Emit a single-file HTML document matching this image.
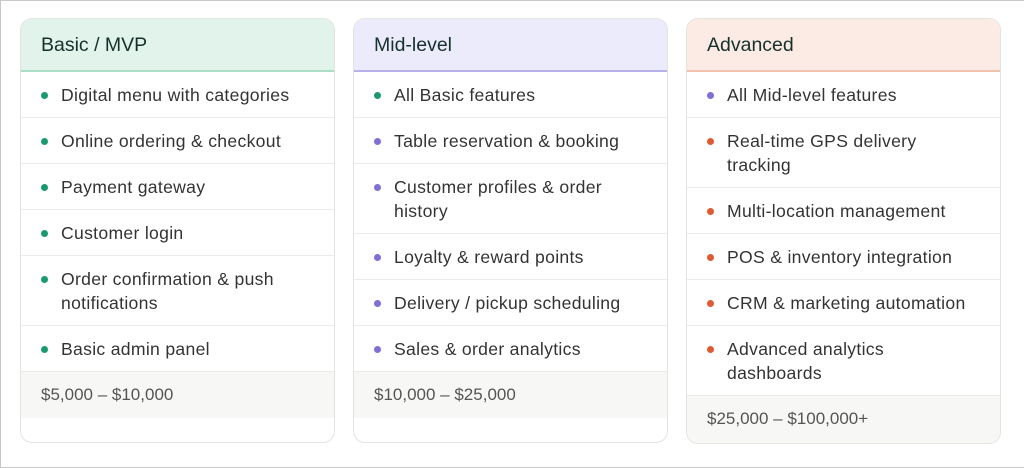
<!DOCTYPE html>
<html><head><style>
*{box-sizing:border-box;margin:0;padding:0}
body{width:1024px;height:468px;background:#fff;font-family:"Liberation Sans",sans-serif;position:relative;overflow:hidden}
.frame{position:absolute;left:0;top:0;width:1024px;height:468px;border:1px solid #c8c8c8;border-right:none}
.card{position:absolute;top:18px;width:315px;border:1px solid #e3e3e0;border-radius:12px;overflow:hidden;background:#fff}
.hd{height:53px;padding:15px 0 0 20px;font-size:19.5px;color:#16302c;border-bottom:2px solid}
.row{border-bottom:1px solid #ebebea;padding:11px 6px 10px 40px;font-size:17.6px;letter-spacing:0.3px;line-height:24px;color:#333;position:relative}
.row:before{content:"";position:absolute;left:20px;top:20px;width:7px;height:7px;border-radius:50%;background:var(--c)}
.price{background:#f7f7f5;padding:12px 0 12px 20px;font-size:17px;line-height:22px;color:#555}
.g{--c:#1a9a6c}.p{--c:#7f6fd6}.o{--c:#de5a30}
</style></head><body>
<div class="frame"></div>
<div class="card" style="left:20px;height:425px">
<div class="hd" style="background:#e1f3eb;border-color:#aadcc6">Basic / MVP</div>
<div class="row g">Digital menu with categories</div>
<div class="row g">Online ordering &amp; checkout</div>
<div class="row g">Payment gateway</div>
<div class="row g">Customer login</div>
<div class="row g">Order confirmation &amp; push<br>notifications</div>
<div class="row g">Basic admin panel</div>
<div class="price">$5,000 – $10,000</div>
</div>
<div class="card" style="left:353px;height:425px">
<div class="hd" style="background:#ecebfb;border-color:#b8b2ea">Mid-level</div>
<div class="row g">All Basic features</div>
<div class="row p">Table reservation &amp; booking</div>
<div class="row p">Customer profiles &amp; order<br>history</div>
<div class="row p">Loyalty &amp; reward points</div>
<div class="row p">Delivery / pickup scheduling</div>
<div class="row p">Sales &amp; order analytics</div>
<div class="price">$10,000 – $25,000</div>
</div>
<div class="card" style="left:686px;height:426px">
<div class="hd" style="background:#fbebe4;border-color:#f0c3ae">Advanced</div>
<div class="row p">All Mid-level features</div>
<div class="row o">Real-time GPS delivery<br>tracking</div>
<div class="row o">Multi-location management</div>
<div class="row o">POS &amp; inventory integration</div>
<div class="row o">CRM &amp; marketing automation</div>
<div class="row o">Advanced analytics<br>dashboards</div>
<div class="price" style="height:50px">$25,000 – $100,000+</div>
</div>
</body></html>
